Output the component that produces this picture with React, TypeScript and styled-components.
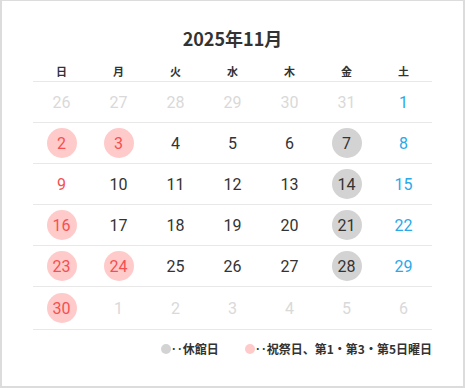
import styled, { createGlobalStyle } from "styled-components"

const GlobalStyle = createGlobalStyle`
  html, body {
    margin: 0;
    padding: 0;
    background: #fff;
  }
`

type Tone = 'normal' | 'sun' | 'sat' | 'other'
type Mark = 'none' | 'closed' | 'holiday'

interface Day {
  num: number
  tone: Tone
  mark: Mark
}

const Frame = styled('div')`
  width: 465px;
  height: 388px;
  box-sizing: border-box;
  border: 2px solid #dcdcdc;
  border-top-width: 1px;
  padding: 24px 31px 0;
  display: flex;
  flex-direction: column;
  align-items: center;
  font-family: "Noto Sans CJK JP", "Noto Sans", sans-serif;
  color: #333;
`

const Title = styled('h2')`
  margin: 0;
  font-size: 18px;
  line-height: 26px;
  font-weight: 700;
  color: #333;
`

const Grid = styled('div')`
  width: 399px;
  display: grid;
  grid-template-columns: repeat(7, 1fr);
  margin-top: 2px;
`

const HeadCell = styled('div')`
  height: 29px;
  display: flex;
  align-items: center;
  justify-content: center;
  padding-top: 8px;
  box-sizing: border-box;
  border-bottom: 1px solid #e8e8e8;
  font-size: 11px;
  font-weight: 700;
  color: #333;
`

const Cell = styled('div')<{ $last: boolean }>`
  height: ${p => p.$last ? 42 : 40}px;
  display: flex;
  align-items: center;
  justify-content: center;
  border-bottom: 1px solid #e8e8e8;
`

const toneColor: Record<Tone, string> = {
  normal: '#333',
  sun: '#f55050',
  sat: '#29a9ea',
  other: '#d9d9d9',
}

const markColor: Record<Mark, string> = {
  none: 'transparent',
  closed: '#d3d3d3',
  holiday: '#ffcaca',
}

const Num = styled('span')<{ $tone: Tone; $mark: Mark }>`
  width: 30px;
  height: 30px;
  border-radius: 50%;
  display: flex;
  align-items: center;
  justify-content: center;
  font-family: Roboto, "Noto Sans", sans-serif;
  font-size: 16px;
  color: ${p => toneColor[p.$tone]};
  background: ${p => markColor[p.$mark]};
`

const Legend = styled('div')`
  width: 399px;
  display: flex;
  justify-content: flex-end;
  gap: 26px;
  margin-top: 11px;
`

const LegendItem = styled('div')`
  display: flex;
  align-items: center;
  font-size: 12px;
  font-weight: 700;
  line-height: 16px;
  color: #333;
`

const Dot = styled('span')<{ $mark: Mark }>`
  width: 10px;
  height: 10px;
  border-radius: 50%;
  background: ${p => markColor[p.$mark]};
`

const WEEK = ['日', '月', '火', '水', '木', '金', '土']

const closed = [7, 14, 21, 28]
const holiday = [2, 3, 16, 23, 24, 30]

const buildDays = (): Day[] => {
  const days: Day[] = []
  for (let d = 26; d <= 31; d++) days.push({ num: d, tone: 'other', mark: 'none' })
  for (let d = 1; d <= 30; d++) {
    const col = days.length % 7
    const isHoliday = holiday.includes(d)
    const tone: Tone = col === 0 || isHoliday ? 'sun' : col === 6 ? 'sat' : 'normal'
    const mark: Mark = isHoliday ? 'holiday' : closed.includes(d) ? 'closed' : 'none'
    days.push({ num: d, tone, mark })
  }
  for (let d = 1; days.length < 42; d++) days.push({ num: d, tone: 'other', mark: 'none' })
  return days
}

const App = (): JSX.Element => {

  const days = buildDays()

  return (
    <Frame>
      <GlobalStyle />

      <Title>2025年11月</Title>

      <Grid>
        {WEEK.map(w => <HeadCell key={w}>{w}</HeadCell>)}

        {days.map((v, i) => (
          <Cell key={i} $last={i >= 35}>
            <Num $tone={v.tone} $mark={v.mark}>{v.num}</Num>
          </Cell>
        ))}
      </Grid>

      <Legend>
        <LegendItem>
          <Dot $mark="closed" />‥休館日
        </LegendItem>
        <LegendItem>
          <Dot $mark="holiday" />‥祝祭日、第1・第3・第5日曜日
        </LegendItem>
      </Legend>
    </Frame>
  )
}

export default App
